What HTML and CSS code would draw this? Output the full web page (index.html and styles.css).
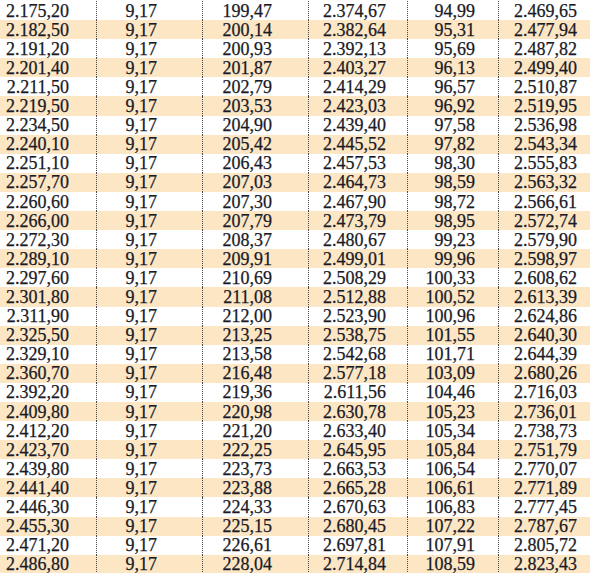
FILE: index.html
```html
<!DOCTYPE html>
<html>
<head>
<meta charset="utf-8">
<link rel="stylesheet" href="styles.css">
</head>
<body>
<div class="table">
<div class="row"><span>2.175,20</span><span>9,17</span><span>199,47</span><span>2.374,67</span><span>94,99</span><span>2.469,65</span></div>
<div class="row"><span>2.182,50</span><span>9,17</span><span>200,14</span><span>2.382,64</span><span>95,31</span><span>2.477,94</span></div>
<div class="row"><span>2.191,20</span><span>9,17</span><span>200,93</span><span>2.392,13</span><span>95,69</span><span>2.487,82</span></div>
<div class="row"><span>2.201,40</span><span>9,17</span><span>201,87</span><span>2.403,27</span><span>96,13</span><span>2.499,40</span></div>
<div class="row"><span>2.211,50</span><span>9,17</span><span>202,79</span><span>2.414,29</span><span>96,57</span><span>2.510,87</span></div>
<div class="row"><span>2.219,50</span><span>9,17</span><span>203,53</span><span>2.423,03</span><span>96,92</span><span>2.519,95</span></div>
<div class="row"><span>2.234,50</span><span>9,17</span><span>204,90</span><span>2.439,40</span><span>97,58</span><span>2.536,98</span></div>
<div class="row"><span>2.240,10</span><span>9,17</span><span>205,42</span><span>2.445,52</span><span>97,82</span><span>2.543,34</span></div>
<div class="row"><span>2.251,10</span><span>9,17</span><span>206,43</span><span>2.457,53</span><span>98,30</span><span>2.555,83</span></div>
<div class="row"><span>2.257,70</span><span>9,17</span><span>207,03</span><span>2.464,73</span><span>98,59</span><span>2.563,32</span></div>
<div class="row"><span>2.260,60</span><span>9,17</span><span>207,30</span><span>2.467,90</span><span>98,72</span><span>2.566,61</span></div>
<div class="row"><span>2.266,00</span><span>9,17</span><span>207,79</span><span>2.473,79</span><span>98,95</span><span>2.572,74</span></div>
<div class="row"><span>2.272,30</span><span>9,17</span><span>208,37</span><span>2.480,67</span><span>99,23</span><span>2.579,90</span></div>
<div class="row"><span>2.289,10</span><span>9,17</span><span>209,91</span><span>2.499,01</span><span>99,96</span><span>2.598,97</span></div>
<div class="row"><span>2.297,60</span><span>9,17</span><span>210,69</span><span>2.508,29</span><span>100,33</span><span>2.608,62</span></div>
<div class="row"><span>2.301,80</span><span>9,17</span><span>211,08</span><span>2.512,88</span><span>100,52</span><span>2.613,39</span></div>
<div class="row"><span>2.311,90</span><span>9,17</span><span>212,00</span><span>2.523,90</span><span>100,96</span><span>2.624,86</span></div>
<div class="row"><span>2.325,50</span><span>9,17</span><span>213,25</span><span>2.538,75</span><span>101,55</span><span>2.640,30</span></div>
<div class="row"><span>2.329,10</span><span>9,17</span><span>213,58</span><span>2.542,68</span><span>101,71</span><span>2.644,39</span></div>
<div class="row"><span>2.360,70</span><span>9,17</span><span>216,48</span><span>2.577,18</span><span>103,09</span><span>2.680,26</span></div>
<div class="row"><span>2.392,20</span><span>9,17</span><span>219,36</span><span>2.611,56</span><span>104,46</span><span>2.716,03</span></div>
<div class="row"><span>2.409,80</span><span>9,17</span><span>220,98</span><span>2.630,78</span><span>105,23</span><span>2.736,01</span></div>
<div class="row"><span>2.412,20</span><span>9,17</span><span>221,20</span><span>2.633,40</span><span>105,34</span><span>2.738,73</span></div>
<div class="row"><span>2.423,70</span><span>9,17</span><span>222,25</span><span>2.645,95</span><span>105,84</span><span>2.751,79</span></div>
<div class="row"><span>2.439,80</span><span>9,17</span><span>223,73</span><span>2.663,53</span><span>106,54</span><span>2.770,07</span></div>
<div class="row"><span>2.441,40</span><span>9,17</span><span>223,88</span><span>2.665,28</span><span>106,61</span><span>2.771,89</span></div>
<div class="row"><span>2.446,30</span><span>9,17</span><span>224,33</span><span>2.670,63</span><span>106,83</span><span>2.777,45</span></div>
<div class="row"><span>2.455,30</span><span>9,17</span><span>225,15</span><span>2.680,45</span><span>107,22</span><span>2.787,67</span></div>
<div class="row"><span>2.471,20</span><span>9,17</span><span>226,61</span><span>2.697,81</span><span>107,91</span><span>2.805,72</span></div>
<div class="row"><span>2.486,80</span><span>9,17</span><span>228,04</span><span>2.714,84</span><span>108,59</span><span>2.823,43</span></div>
</div>
</body>
</html>
```

FILE: styles.css
```css
html, body {
  margin: 0;
  padding: 0;
  background: #ffffff;
}

body {
  width: 590px;
  height: 573px;
  overflow: hidden;
  font-family: "Liberation Serif", "Times New Roman", serif;
  font-size: 18px;
  color: #1a1a26;
  -webkit-text-stroke: 0.25px #1a1a26;
}

.table {
  padding-top: 1px;
}

.row {
  display: grid;
  grid-template-columns: 96px 106px 106px 99px 91px 92px;
  height: 19.1px;
}

.row:nth-child(even) {
  background: #fce6c4;
}

.row span {
  text-align: right;
  white-space: nowrap;
  line-height: 14px;
  padding-top: 2.6px;
}

.row span + span {
  border-left: 1px dotted #4a4a4a;
}

.row span:nth-child(1) { padding-right: 27px; }
.row span:nth-child(2) { padding-right: 45px; }
.row span:nth-child(3) { padding-right: 36px; }
.row span:nth-child(4) { padding-right: 21px; }
.row span:nth-child(5) { padding-right: 23px; }
.row span:nth-child(6) { padding-right: 13px; }
```
